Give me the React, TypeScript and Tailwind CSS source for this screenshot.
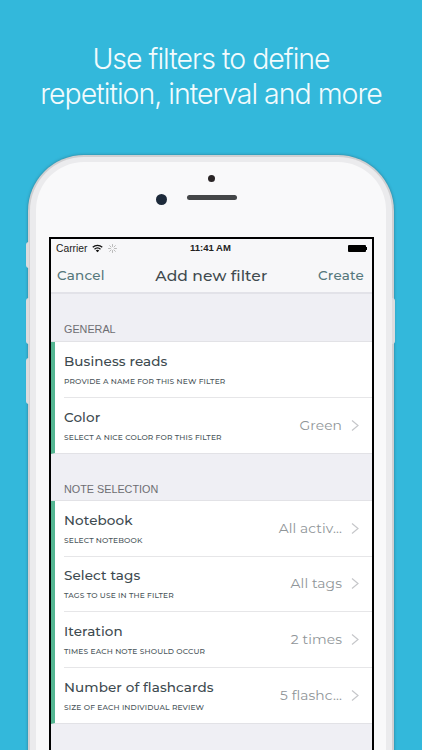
type Row = { title: string; sub: string; value?: string };

const general: Row[] = [
    { title: 'Business reads', sub: 'PROVIDE A NAME FOR THIS NEW FILTER' },
    { title: 'Color', sub: 'SELECT A NICE COLOR FOR THIS FILTER', value: 'Green' },
];

const noteSelection: Row[] = [
    { title: 'Notebook', sub: 'SELECT NOTEBOOK', value: 'All activ...' },
    { title: 'Select tags', sub: 'TAGS TO USE IN THE FILTER', value: 'All tags' },
    { title: 'Iteration', sub: 'TIMES EACH NOTE SHOULD OCCUR', value: '2 times' },
    { title: 'Number of flashcards', sub: 'SIZE OF EACH INDIVIDUAL REVIEW', value: '5 flashc...' },
];

function Group({ rows }: { rows: Row[] }) {
    return (
        <div className="bg-white border-l-[4px] border-[#55b692] border-b border-b-[#e2e2e6]">
            {rows.map((row, i) => (
                <div
                    key={row.title}
                    className={`ml-[9px] h-[55.5px] flex items-center justify-between pr-[13px] ${
                        i < rows.length - 1 ? 'border-b border-[#e6e6e8]' : ''
                    }`}
                >
                    <div className="flex flex-col">
                        <span className="text-[13.5px] leading-[18px] tracking-[0.1px] text-[#3d4a4f] font-medium">
                            {row.title}
                        </span>
                        <span className="mt-[7px] text-[7.5px] leading-[10px] tracking-[0.15px] text-[#4b565b] font-medium">
                            {row.sub}
                        </span>
                    </div>
                    {row.value && (
                        <div className="flex items-center gap-[9px]">
                            <span className="text-[13.8px] tracking-[0.1px] text-[#8f9598]">{row.value}</span>
                            <svg width="8" height="11" viewBox="0 0 8 11" fill="none" stroke="#c6c7ca" strokeWidth="1.2">
                                <path d="M1 0.5L7 5.5L1 10.5" />
                            </svg>
                        </div>
                    )}
                </div>
            ))}
        </div>
    );
}

function Wifi() {
    return (
        <svg width="11" height="9" viewBox="0 0 22 17" fill="none" stroke="#111" strokeWidth="2.6">
            <path d="M1.5 6 A14 14 0 0 1 20.5 6" />
            <path d="M5 10 A9 9 0 0 1 17 10" />
            <path d="M11 16 L7.5 12.6 A5 5 0 0 1 14.5 12.6 Z" fill="#111" stroke="none" />
        </svg>
    );
}

function Spinner() {
    return (
        <svg width="9" height="9" viewBox="0 0 18 18" stroke="#aaa" strokeWidth="1.6" strokeLinecap="round">
            <path d="M9 1v4M9 13v4M1 9h4M13 9h4M3.3 3.3l2.8 2.8M11.9 11.9l2.8 2.8M3.3 14.7l2.8-2.8M11.9 6.1l2.8-2.8" />
        </svg>
    );
}

export default function App() {
    return (
        <div className="w-[422px] h-[750px] overflow-hidden bg-[#33b8db] font-['Montserrat','Lato','Noto_Sans',sans-serif]">
            <h1 className="pt-[41px] text-center text-[#f2fbfd] text-[28.5px] leading-[35px] tracking-[-1px] font-light font-['Inter','Liberation_Sans',sans-serif]">
                Use filters to define
                <br />
                repetition, interval and more
            </h1>

            <div className="relative mt-[44px] mx-[28px] w-[366px]">
                {/* side buttons */}
                <div className="absolute -left-[2px] top-[87px] w-[3px] h-[26px] bg-[#dcdcde] rounded-l" />
                <div className="absolute -left-[2px] top-[143px] w-[3px] h-[46px] bg-[#dcdcde] rounded-l" />
                <div className="absolute -left-[2px] top-[203px] w-[3px] h-[46px] bg-[#dcdcde] rounded-l" />
                <div className="absolute -right-[1px] top-[143px] w-[3px] h-[46px] bg-[#dcdcde] rounded-r" />

                <div className="h-[640px] rounded-t-[56px] bg-[#d0d0d2] p-[2px] shadow-[0_0_3px_rgba(40,70,80,0.55)]">
                    <div className="h-full rounded-t-[54px] bg-[#ebebed] pt-[5px] px-[6px]">
                        <div className="h-full rounded-t-[48px] bg-[#f9f9fa] pl-[13px] pr-[12px]">
                            <div className="h-[75px] relative flex flex-col items-center">
                                <div className="mt-[13px] w-[7px] h-[7px] rounded-full bg-[#2a2526]" />
                                <div className="mt-[13px] w-[50px] h-[5px] rounded-full bg-[#444648]" />
                                <div className="absolute left-[107px] top-[32px] w-[11px] h-[11px] rounded-full bg-[#1d2a3a]" />
                            </div>

                            <div className="border-2 border-b-0 border-black h-[600px] bg-[#efeff4] overflow-hidden">
                                <div className="h-[55px] bg-[#f7f7f9] border-b-2 border-[#e2e2e8]">
                                    <div className="h-[19px] relative flex items-center justify-between pl-[5px] pr-[5px] text-[10.3px] text-[#222] font-['Liberation_Sans',sans-serif]">
                                        <div className="flex items-center gap-[5px]">
                                            <span>Carrier</span>
                                            <Wifi />
                                            <Spinner />
                                        </div>
                                        <span className="absolute left-[139px] text-[9.5px] font-bold">11:41 AM</span>
                                        <div className="flex items-center">
                                            <div className="w-[18px] h-[7px] bg-black rounded-[1px]" />
                                            <div className="w-[1px] h-[3px] bg-black" />
                                        </div>
                                    </div>
                                    <div className="h-[34px] flex items-center justify-between pl-[6px] pr-[8px] pt-[1px]">
                                        <span className="text-[13.5px] font-medium text-[#56777c] tracking-[0.2px]">Cancel</span>
                                        <span className="text-[15.5px] font-medium text-[#3f4a4e] tracking-[0.1px]">Add new filter</span>
                                        <span className="text-[13.5px] font-medium text-[#56777c] tracking-[0.2px]">Create</span>
                                    </div>
                                </div>

                                <div className="pl-[13px] pt-[28px] h-[48px] border-b border-[#e2e2e6] text-[10.8px] leading-[14px] text-[#6d6d72] font-['Liberation_Sans',sans-serif]">
                                    GENERAL
                                </div>
                                <Group rows={general} />

                                <div className="pl-[13px] pt-[27.5px] h-[47px] border-b border-[#e2e2e6] text-[10.8px] leading-[14px] text-[#6d6d72] font-['Liberation_Sans',sans-serif]">
                                    NOTE SELECTION
                                </div>
                                <Group rows={noteSelection} />
                            </div>
                        </div>
                    </div>
                </div>
            </div>
        </div>
    );
}
